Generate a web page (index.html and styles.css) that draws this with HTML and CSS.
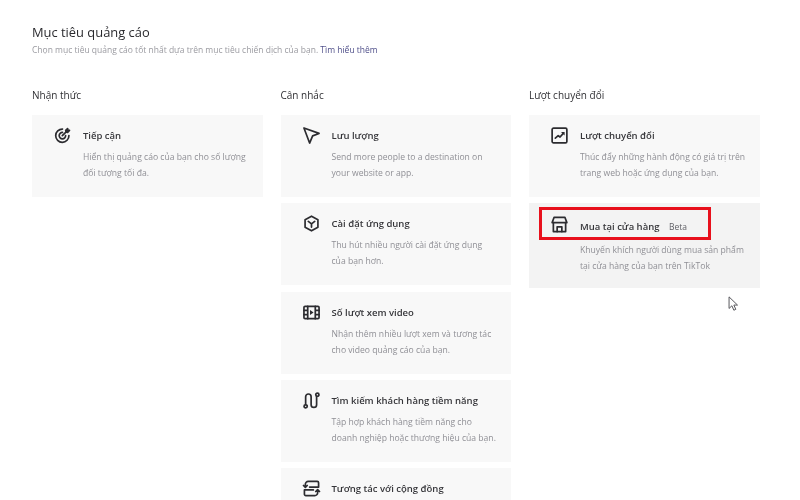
FILE: index.html
```html
<!DOCTYPE html>
<html lang="vi">
<head>
    <meta charset="UTF-8">
    <title>Mục tiêu quảng cáo</title>
    <link rel="stylesheet" href="styles.css">
</head>
<body>
    <div class="page">
        <h1>Mục tiêu quảng cáo</h1>
        <p class="subtitle">Chọn mục tiêu quảng cáo tốt nhất dựa trên mục tiêu chiến dịch của bạn. <a href="#">Tìm hiểu thêm</a></p>
        <div class="columns">
            <div class="column">
                <h2>Nhận thức</h2>
                <div class="card">
                    <svg class="icon" viewBox="0 0 18 18"><path d="M9 2.200a7 7 0 1 0 6.800 6.800M9 5.700a3.400 3.400 0 1 0 3.300 3.300"/><path d="M8.800 9.200 14 4M12.400 3.600l.3 1.700 1.700.3 2-2-1.700-.3-.3-1.700z"/></svg>
                    <div class="card-body">
                        <h3>Tiếp cận</h3>
                        <p>Hiển thị quảng cáo của bạn cho số lượng đối tượng tối đa.</p>
                    </div>
                </div>
            </div>
            <div class="column">
                <h2>Cân nhắc</h2>
                <div class="card">
                    <svg class="icon" viewBox="0 0 18 18"><path d="M1 1 17 6.800 10.200 9.400 7 17z"/></svg>
                    <div class="card-body">
                        <h3>Lưu lượng</h3>
                        <p>Send more people to a destination on your website or app.</p>
                    </div>
                </div>
                <div class="card">
                    <svg class="icon" viewBox="0 0 18 18"><path d="M9 1.300 15.800 5v8L9 16.700 2.200 13V5z"/><path d="M5.600 6.800 9 9.400l3.400-2.600M9 9.400v3.400"/></svg>
                    <div class="card-body">
                        <h3>Cài đặt ứng dụng</h3>
                        <p>Thu hút nhiều người cài đặt ứng dụng của bạn hơn.</p>
                    </div>
                </div>
                <div class="card">
                    <svg class="icon" viewBox="0 0 18 18"><rect x="1" y="2.500" width="16" height="13" rx="1.200"/><path d="M5 2.500v13M13 2.500v13M1 6.800h4M1 11.200h4M13 6.800h4M13 11.200h4"/><path class="solid" d="M7.400 6.400 11.200 9l-3.800 2.600z"/></svg>
                    <div class="card-body">
                        <h3>Số lượt xem video</h3>
                        <p>Nhận thêm nhiều lượt xem và tương tác cho video quảng cáo của bạn.</p>
                    </div>
                </div>
                <div class="card">
                    <svg class="icon" viewBox="0 0 18 18"><circle cx="2.800" cy="15.200" r="1.700"/><circle cx="15.200" cy="2.800" r="1.700"/><path d="M2.800 13.500V5a2.900 2.900 0 0 1 5.800 0v8.400a2.900 2.900 0 0 0 5.800 0V4.500"/></svg>
                    <div class="card-body">
                        <h3>Tìm kiếm khách hàng tiềm năng</h3>
                        <p>Tập hợp khách hàng tiềm năng cho doanh nghiệp hoặc thương hiệu của bạn.</p>
                    </div>
                </div>
                <div class="card">
                    <svg class="icon" viewBox="0 0 18 18"><path d="M2.500 7.500V4.500a3 3 0 0 1 3-3H15a1.500 1.500 0 0 1 1.500 1.500v4.500H7M.5 5.800l2 2 2-2"/><path d="M15.500 10.500v3a3 3 0 0 1-3 3H3a1.500 1.500 0 0 1-1.500-1.500v-4.500H11M13.500 12.200l2-2 2 2"/></svg>
                    <div class="card-body">
                        <h3>Tương tác với cộng đồng</h3>
                    </div>
                </div>
            </div>
            <div class="column">
                <h2>Lượt chuyển đổi</h2>
                <div class="card">
                    <svg class="icon" viewBox="0 0 18 18"><rect x="1.200" y="1.200" width="15.600" height="15.600" rx="1.500"/><path d="M4.600 11.800 7.600 9.200l2 1.400 3.400-3.800"/><path class="solid" d="M10.600 5.200h3.800V9z"/></svg>
                    <div class="card-body">
                        <h3>Lượt chuyển đổi</h3>
                        <p>Thúc đẩy những hành động có giá trị trên trang web hoặc ứng dụng của bạn.</p>
                    </div>
                </div>
                <div class="card card-active">
                    <svg class="icon" viewBox="0 0 18 18"><path d="M3.200 1.500h11.600L16.800 7H1.200z"/><path d="M2.500 7v9.500h13V7"/><path d="M6.500 16.500v-5h5v5"/></svg>
                    <div class="card-body">
                        <h3>Mua tại cửa hàng <span class="badge">Beta</span></h3>
                        <p>Khuyến khích người dùng mua sản phẩm tại cửa hàng của bạn trên TikTok</p>
                    </div>
                    <div class="highlight"></div>
                </div>
            </div>
        </div>
        <svg class="cursor" viewBox="0 0 12 18"><path d="M1 1v13l3.200-3 2.200 5 2.200-1-2.200-4.800h4.100z"/></svg>
    </div>
</body>
</html>
```

FILE: styles.css
```css
body {
    margin: 0;
    background-color: #fff;
    font-family: "Open Sans", "Noto Sans", sans-serif;
    overflow: hidden;
}
.page {
    position: relative;
    height: 500px;
    padding: 24px 40px 0 32px;
    box-sizing: border-box;
    overflow: hidden;
    filter: blur(0.55px);
}
h1 {
    margin: 0;
    font-size: 12.9px;
    line-height: 16px;
    font-weight: 500;
    color: #2a2a2e;
}
.subtitle {
    margin: 3px 0 0;
    font-size: 8.5px;
    line-height: 14px;
    color: #9a9aa0;
}
.subtitle a {
    color: #50508a;
    text-decoration: none;
}
.columns {
    display: grid;
    grid-template-columns: repeat(3, 230.5px);
    column-gap: 18px;
    margin-top: 31px;
}
.column {
    display: flex;
    flex-direction: column;
    gap: 6.25px;
}
h2 {
    margin: 0 0 6.75px;
    font-size: 10px;
    line-height: 14px;
    font-weight: 500;
    color: #2f2f33;
}
.card {
    position: relative;
    display: flex;
    flex-shrink: 0;
    gap: 12px;
    height: 82px;
    padding: 14px 13.5px 0 22px;
    box-sizing: border-box;
    background-color: #f8f8f8;
}
.card-active {
    height: 85px;
    padding-top: 17px;
    background-color: #f3f3f3;
}
.icon {
    flex: 0 0 17px;
    width: 17px;
    height: 17px;
    margin-top: -2px;
    overflow: visible;
    fill: none;
    stroke: #2c2c30;
    stroke-width: 1.8;
    stroke-linejoin: round;
    stroke-linecap: round;
}
.card-active .icon {
    margin-top: -4px;
}
.icon .solid {
    fill: #2c2c30;
    stroke: none;
}
h3 {
    margin: 0;
    font-size: 9.5px;
    line-height: 14px;
    font-weight: 600;
    color: #36363a;
}
.card-body p {
    margin: 6px 0 0;
    font-size: 8.6px;
    line-height: 16px;
    color: #8f8f95;
}
.card-active .card-body p {
    margin-top: 8px;
}
.badge {
    margin-left: 7px;
    font-size: 8.5px;
    font-weight: 400;
    color: #5f5f65;
}
/* red annotation drawn over the card */
.highlight {
    position: absolute;
    top: 4px;
    left: 10px;
    width: 172px;
    height: 33px;
    box-sizing: border-box;
    border: 3px solid #e8101c;
}
.cursor {
    position: absolute;
    top: 296px;
    left: 728px;
    width: 11px;
    height: 16px;
    fill: #fff;
    stroke: #55555a;
    stroke-width: 1.1;
}
```
